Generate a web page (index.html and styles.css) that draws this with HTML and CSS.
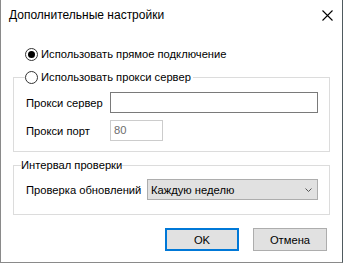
FILE: index.html
```html
<!DOCTYPE html>
<html lang="ru">
<head>
<meta charset="utf-8">
<link rel="stylesheet" href="styles.css">
</head>
<body>
<div class="window">
  <div class="titlebar">
    <span class="title">Дополнительные настройки</span>
    <svg class="close" width="11" height="11" viewBox="0 0 11 11"><path d="M0.5 0.5 L10.5 10.5 M10.5 0.5 L0.5 10.5" stroke="#000" stroke-width="1.1" fill="none"/></svg>
  </div>
  <div class="content">
    <label class="radio-row direct"><span class="radio checked"></span><span>Использовать прямое подключение</span></label>
    <fieldset class="group proxy">
      <legend class="legend-radio"><span class="radio"></span><span>Использовать прокси сервер</span></legend>
      <div class="field-row">
        <span class="field-label">Прокси сервер</span>
        <span class="input server"></span>
      </div>
      <div class="field-row">
        <span class="field-label">Прокси порт</span>
        <span class="input port disabled">80</span>
      </div>
    </fieldset>
    <fieldset class="group interval">
      <legend class="legend-text">Интервал проверки</legend>
      <div class="field-row">
        <span class="field-label wide">Проверка обновлений</span>
        <span class="select"><span>Каждую неделю</span><svg width="7" height="4" viewBox="0 0 7 4"><path d="M0.5 0.5 L3.5 3.5 L6.5 0.5" stroke="#555" stroke-width="1" fill="none"/></svg></span>
      </div>
    </fieldset>
    <div class="buttons">
      <span class="btn default">OK</span>
      <span class="btn">Отмена</span>
    </div>
  </div>
</div>
</body>
</html>
```
FILE: styles.css
```css
html, body {
  margin: 0;
  padding: 0;
  background: #ffffff;
}
.window {
  width: 343px;
  height: 263px;
  box-sizing: border-box;
  border-left: 1px solid #8a8a8a;
  border-right: 1px solid #4f5a5f;
  border-bottom: 1px solid #8a8a8a;
  font-family: "Liberation Sans", Arial, sans-serif;
  font-size: 11.2px;
  color: #000;
  background: #fff;
}
.titlebar {
  height: 31px;
  display: flex;
  align-items: center;
  justify-content: space-between;
  padding: 0 9px 0 8px;
}
.title {
  font-size: 12px;
  margin-top: -1px;
}
.close {
  display: block;
  margin-top: -1px;
}
.content {
  padding: 0 12px 0 12px;
}
.radio-row {
  display: flex;
  align-items: center;
  gap: 3px;
  height: 14px;
}
.direct {
  margin-top: 16px;
  margin-left: 12px;
}
.radio {
  width: 11px;
  height: 11px;
  border: 1px solid #333;
  border-radius: 50%;
  position: relative;
  flex: none;
  box-sizing: content-box;
}
.radio.checked::after {
  content: "";
  position: absolute;
  left: 2px;
  top: 2px;
  width: 7px;
  height: 7px;
  border-radius: 50%;
  background: #000;
}
.group {
  margin: 0;
  border: 1px solid #dcdcdc;
  padding: 0 11px 0 12px;
  min-width: 0;
}
.proxy {
  margin-top: 9px;
  padding-top: 8px;
  padding-bottom: 10px;
}
.legend-radio {
  display: flex;
  align-items: center;
  gap: 3px;
  height: 14px;
  padding: 0 2px 0 0;
  margin-left: -1px;
}
.legend-text {
  padding: 0;
  margin-left: -5px;
  height: 14px;
  line-height: 14px;
}
.field-row {
  display: flex;
  align-items: center;
}
.field-row + .field-row {
  margin-top: 7px;
}
.field-label {
  width: 84px;
  flex: none;
  white-space: nowrap;
}
.field-label.wide {
  width: 121px;
}
.input {
  height: 21px;
  box-sizing: border-box;
  border: 1px solid #7a7a7a;
  background: #fff;
}
.input.server {
  width: 208px;
}
.input.port {
  width: 53px;
  border-color: #cccccc;
  color: #6d6d6d;
  padding-left: 3px;
  line-height: 19px;
}
.interval {
  margin-top: 6px;
  padding-top: 7px;
  padding-bottom: 14px;
}
.select {
  width: 172px;
  height: 21px;
  box-sizing: border-box;
  border: 1px solid #adadad;
  background: #e1e1e1;
  display: flex;
  align-items: center;
  justify-content: space-between;
  padding: 0 5px 0 3px;
}
.select svg {
  display: block;
}
.buttons {
  display: flex;
  justify-content: flex-end;
  gap: 14px;
  margin-top: 13px;
  padding-right: 3px;
}
.btn {
  width: 74px;
  height: 23px;
  box-sizing: border-box;
  border: 1px solid #adadad;
  background: #e1e1e1;
  display: flex;
  align-items: center;
  justify-content: center;
}
.btn.default {
  border: 2px solid #0078d7;
}
```
